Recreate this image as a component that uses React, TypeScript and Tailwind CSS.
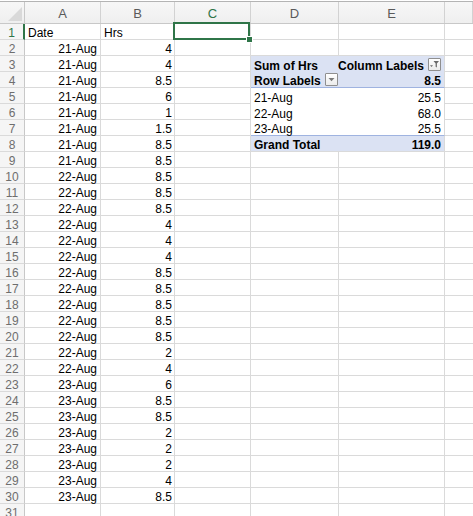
import React from 'react';

const rows: [string, string][] = [
    ['21-Aug', '4'],
    ['21-Aug', '4'],
    ['21-Aug', '8.5'],
    ['21-Aug', '6'],
    ['21-Aug', '1'],
    ['21-Aug', '1.5'],
    ['21-Aug', '8.5'],
    ['21-Aug', '8.5'],
    ['22-Aug', '8.5'],
    ['22-Aug', '8.5'],
    ['22-Aug', '8.5'],
    ['22-Aug', '4'],
    ['22-Aug', '4'],
    ['22-Aug', '4'],
    ['22-Aug', '8.5'],
    ['22-Aug', '8.5'],
    ['22-Aug', '8.5'],
    ['22-Aug', '8.5'],
    ['22-Aug', '8.5'],
    ['22-Aug', '2'],
    ['22-Aug', '4'],
    ['23-Aug', '6'],
    ['23-Aug', '8.5'],
    ['23-Aug', '8.5'],
    ['23-Aug', '2'],
    ['23-Aug', '2'],
    ['23-Aug', '2'],
    ['23-Aug', '4'],
    ['23-Aug', '8.5'],
];

const pivotBody: [string, string][] = [
    ['21-Aug', '25.5'],
    ['22-Aug', '68.0'],
    ['23-Aug', '25.5'],
];

const cols = 'grid grid-cols-[25px_76px_74px_76px_88px_106px_1fr] grid-rows-[16px]';

const DropButton = ({ filtered }: { filtered?: boolean }) => (
    <span className="w-[13px] h-[13px] border border-[#8f8f8f] rounded-[1px] bg-gradient-to-b from-white to-[#ececec] flex items-center justify-center shrink-0">
        {filtered ? (
            <svg width="11" height="11" viewBox="0 0 11 11">
                <path d="M1 6.2 L4 6.2 L2.5 8 Z" fill="#6b6b6b" />
                <path d="M4.5 2 L10 2 L7.9 4.6 L7.9 8.6 L6.6 7.8 L6.6 4.6 Z" fill="#6b6b6b" />
            </svg>
        ) : (
            <svg width="11" height="11" viewBox="0 0 11 11">
                <path d="M2.5 4 L8.5 4 L5.5 7.2 Z" fill="#7a7a7a" />
            </svg>
        )}
    </span>
);

const App = () => {
    const headers = ['A', 'B', 'C', 'D', 'E', ''];

    const pivotCells = (r: number) => {
        // pivot table sits in D3:E8
        if (r === 3) {
            return (
                <>
                    <div className="bg-[#dbe2f3] pl-[3px] pt-[4px] font-bold flex items-center">Sum of Hrs</div>
                    <div className="bg-[#dbe2f3] border-r border-[#dadada] pr-[3px] font-bold flex items-center justify-end gap-[4px]">
                        <span className="pt-[4px]">Column Labels</span>
                        <DropButton filtered />
                    </div>
                </>
            );
        }
        if (r === 4) {
            return (
                <>
                    <div className="bg-[#dbe2f3] border-b border-[#9fb3e0] pl-[3px] font-bold flex items-center gap-[4px]">
                        <span className="pt-[4px]">Row Labels</span>
                        <DropButton />
                    </div>
                    <div className="bg-[#dbe2f3] border-b border-r border-[#9fb3e0] border-r-[#dadada] pr-[3px] pt-[4px] font-bold flex items-center justify-end">8.5</div>
                </>
            );
        }
        if (r >= 5 && r <= 7) {
            const [d, v] = pivotBody[r - 5];
            const edge = r === 7 ? 'border-b border-[#9fb3e0]' : '';
            return (
                <>
                    <div className={`pl-[3px] pt-[4px] flex items-center ${edge}`}>{d}</div>
                    <div className={`pr-[3px] pt-[4px] flex items-center justify-end border-r border-r-[#dadada] ${edge}`}>{v}</div>
                </>
            );
        }
        if (r === 8) {
            return (
                <>
                    <div className="bg-[#dbe2f3] border-b border-[#dadada] pl-[3px] pt-[4px] font-bold flex items-center">Grand Total</div>
                    <div className="bg-[#dbe2f3] border-b border-r border-[#dadada] pr-[3px] pt-[4px] font-bold flex items-center justify-end">119.0</div>
                </>
            );
        }
        return (
            <>
                <div className="border-r border-b border-[#dadada]" />
                <div className="border-r border-b border-[#dadada]" />
            </>
        );
    };

    return (
        <div className="w-[473px] h-[516px] overflow-hidden bg-white font-['Liberation_Sans',Arial,sans-serif] text-[12px] text-black leading-[15px] whitespace-nowrap">
            <div className="h-[1px] bg-white" />
            <div className="h-[1px] bg-[#b4b4b4]" />
            <div className="grid grid-cols-[25px_76px_74px_76px_88px_106px_1fr] h-[22px] bg-gradient-to-b from-[#f7f7f7] to-[#efefef] border-b border-[#c8c8c8]">
                <div className="border-r border-[#c8c8c8] relative">
                    <svg className="absolute right-[2px] bottom-[2px]" width="14" height="14" viewBox="0 0 14 14">
                        <path d="M14 0 L14 14 L0 14 Z" fill="#d9d9d9" />
                    </svg>
                </div>
                {headers.map((h, i) => (
                    <div
                        key={i}
                        className={`border-r border-[#d2d2d2] flex items-center justify-center pt-[1px] text-[13px] ${h === 'C' ? 'text-[#2f7548]' : 'text-[#5a5a5a]'}`}
                    >
                        {h}
                    </div>
                ))}
            </div>

            {Array.from({ length: 31 }, (_, i) => i + 1).map((r) => {
                const data = r >= 2 && r <= 30 ? rows[r - 2] : null;
                return (
                    <div key={r} className={`${cols} h-[16px]`}>
                        <div
                            className={`bg-[#f5f5f5] border-b border-[#dadada] flex items-center justify-center pt-[4px] text-[12px] ${r === 1 ? 'text-[#2f7548] border-r-2 border-r-[#2f7548]' : 'text-[#6e6e6e] border-r border-r-[#c8c8c8]'}`}
                        >
                            {r}
                        </div>
                        <div className={`border-r border-b border-[#dadada] flex items-center px-[3px] pt-[4px] ${r === 1 ? 'justify-start' : 'justify-end'}`}>
                            {r === 1 ? 'Date' : data?.[0]}
                        </div>
                        <div className={`border-r border-b border-[#dadada] flex items-center pl-[3px] pr-[2px] pt-[4px] ${r === 1 ? 'justify-start' : 'justify-end'}`}>
                            {r === 1 ? 'Hrs' : data?.[1]}
                        </div>
                        <div className="border-r border-b border-[#dadada] relative">
                            {r === 1 && (
                                <div className="absolute left-[-2px] top-[-2px] w-[77px] h-[18px] border-2 border-[#2f7548] z-10">
                                    <div className="absolute right-[-4px] bottom-[-4px] w-[5px] h-[5px] bg-[#2f7548] outline outline-1 outline-white" />
                                </div>
                            )}
                        </div>
                        {pivotCells(r)}
                        <div className="border-b border-[#dadada]" />
                    </div>
                );
            })}
        </div>
    );
};

export default App;
